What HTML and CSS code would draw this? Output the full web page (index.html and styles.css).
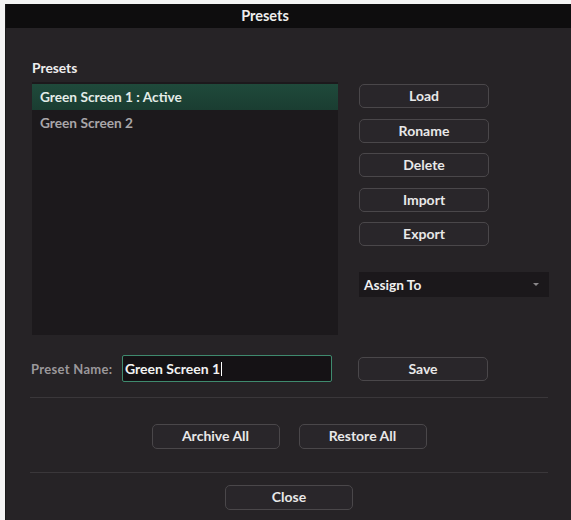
FILE: index.html
```html
<!DOCTYPE html>
<html>
<head>
<meta charset="utf-8">
<link rel="stylesheet" href="styles.css">
</head>
<body>
<div class="dialog">
  <div class="titlebar">Presets</div>
  <div class="content">
    <div class="section-label">Presets</div>
    <div class="main">
      <div class="list">
        <div class="row active">Green Screen 1 : Active</div>
        <div class="row">Green Screen 2</div>
      </div>
      <div class="side">
        <div class="btn">Load</div>
        <div class="btn">Roname</div>
        <div class="btn">Delete</div>
        <div class="btn">Import</div>
        <div class="btn">Export</div>
        <div class="dropdown"><span>Assign To</span><span class="caret"></span></div>
      </div>
    </div>
    <div class="name-row">
      <div class="name-label">Preset Name:</div>
      <div class="input">Green Screen 1<span class="cursor"></span></div>
      <div class="btn save">Save</div>
    </div>
    <div class="sep"></div>
    <div class="pair">
      <div class="btn wide">Archive All</div>
      <div class="btn wide">Restore All</div>
    </div>
    <div class="sep sep2"></div>
    <div class="pair close-row">
      <div class="btn wide">Close</div>
    </div>
  </div>
</div>
</body>
</html>
```
FILE: styles.css
```css
html, body {
  margin: 0;
  padding: 0;
  background: #f4f4f4;
}
body {
  width: 571px;
  height: 520px;
  overflow: hidden;
  font-family: Lato, "Open Sans", sans-serif;
}
.dialog {
  margin: 4px 0 0 6px;
  width: 565px;
  height: 516px;
  background: #262326;
  box-shadow: -1px 0 0 #1a1a1a;
}
.titlebar {
  height: 24px;
  padding-right: 47px;
  background: #0e0d0e;
  color: #ededed;
  font-weight: 700;
  font-size: 14.5px;
  line-height: 24px;
  text-align: center;
}
.content {
  padding: 0 17px 0 24px;
}
.section-label {
  padding-top: 32px;
  padding-left: 2px;
  color: #eeeeee;
  font-weight: 700;
  font-size: 13.8px;
  line-height: 15px;
}
.main {
  display: flex;
  margin-top: 7px;
}
.list {
  width: 306px;
  height: 253px;
  margin-left: 2px;
  background: #1c191c;
  padding-top: 2px;
  box-sizing: border-box;
}
.row {
  height: 26px;
  line-height: 26px;
  padding-left: 8px;
  font-size: 13.7px;
  font-weight: 700;
  color: #a9a6a9;
}
.row.active {
  background: linear-gradient(#1f4a3b, #1a3d31);
  color: #e4ece8;
}
.side {
  display: flex;
  flex-direction: column;
  margin-left: 21px;
  padding-top: 2px;
  gap: 10.5px;
}
.btn {
  width: 130px;
  height: 24px;
  box-sizing: border-box;
  border: 1.5px solid #4a474a;
  border-radius: 5px;
  background: #29262a;
  color: #e8e8e8;
  font-weight: 700;
  font-size: 14px;
  line-height: 21px;
  text-align: center;
}
.dropdown {
  width: 190px;
  height: 25px;
  margin-top: 15.5px;
  background: #1b181b;
  display: flex;
  align-items: center;
  justify-content: space-between;
  padding: 0 10px 0 5px;
  box-sizing: border-box;
  color: #f0f0f0;
  font-weight: 700;
  font-size: 13.7px;
}
.caret {
  width: 0;
  height: 0;
  border-left: 3px solid transparent;
  border-right: 3px solid transparent;
  border-top: 3px solid #8a878a;
}
.name-row {
  display: flex;
  align-items: center;
  margin-top: 20px;
  height: 27px;
}
.name-label {
  width: 92px;
  padding-left: 1px;
  box-sizing: border-box;
  color: #9b989b;
  font-size: 13px;
  font-weight: 700;
  letter-spacing: 0.3px;
  white-space: nowrap;
}
.input {
  width: 210px;
  height: 27px;
  box-sizing: border-box;
  border: 1.5px solid #3f8a6e;
  border-radius: 2px;
  background: #151215;
  color: #f2f2f2;
  font-weight: 700;
  font-size: 14px;
  line-height: 24px;
  padding-left: 2px;
  display: flex;
  align-items: center;
}
.cursor {
  display: inline-block;
  width: 1px;
  height: 14px;
  background: #ffffff;
  margin-left: 1px;
}
.btn.save {
  margin-left: 26px;
}
.sep {
  margin-top: 15px;
  width: 518px;
  height: 1px;
  background: #3a373a;
}
.pair {
  display: flex;
  justify-content: center;
  gap: 19px;
  margin-top: 26px;
  width: 518px;
}
.btn.wide {
  width: 128px;
  height: 25px;
  line-height: 22px;
}
.sep2 {
  margin-top: 23px;
}
.close-row {
  margin-top: 12px;
}
```
